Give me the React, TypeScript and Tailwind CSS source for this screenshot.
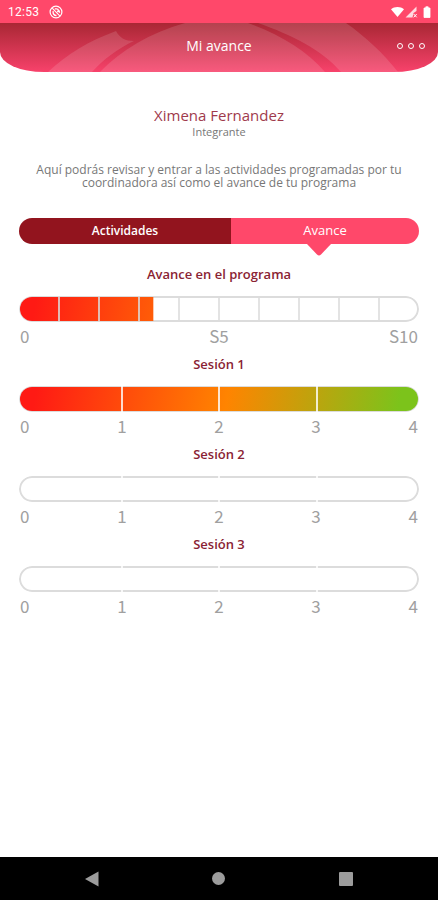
import type { ReactNode } from "react";

const PROGRAM_STEPS = 10;
const SESSION_LABELS = ["0", "1", "2", "3", "4"];

const sessions = [
  { title: "Sesión 1", done: 4 },
  { title: "Sesión 2", done: 0 },
  { title: "Sesión 3", done: 0 },
];

function StatusBar() {
  return (
    <div className="flex h-[23px] items-center justify-between bg-[#ff486a] pr-1 pl-2 text-white">
      <div className="flex items-center gap-2.5">
        <span className="font-[Roboto,sans-serif] text-[12px] tracking-wide">12:53</span>
        <svg viewBox="0 0 14 14" className="size-3.5" fill="none" stroke="currentColor" aria-hidden="true">
          <circle cx="7" cy="7" r="5.9" strokeWidth="1.2" />
          <path d="M3.200 3.200l7.600 7.600" strokeWidth="1.100" />
          <path
            d="M4.200 6.200c-.5 2.400.8 4.300 3.300 4.300M5.800 3.900h1.800c2 0 2.400 2.300.6 2.900M9.800 5.200l.8 2.600"
            strokeWidth="1.400"
          />
        </svg>
      </div>
      {/* wifi, mobile signal, battery */}
      <svg viewBox="0 0 44 14" className="h-3.5 w-11" fill="currentColor" aria-hidden="true">
        <path d="M1 4.200C4.500 1.200 10.500 1.200 14 4.200L7.500 12z" />
        <path d="M26.500 1.500V6l-3 2-1 4.500H15.500z" opacity=".8" />
        <path d="M23.700 9l3 3.300m0-3.300l-3 3.300" stroke="currentColor" strokeWidth="1" />
        <path d="M34 3h1.800V1.800h2.400V3H40v9.500H34z" stroke="currentColor" strokeWidth=".8" strokeLinejoin="round" />
      </svg>
    </div>
  );
}

function Header() {
  return (
    <header className="relative grid h-[49px] grid-cols-[1fr_auto_1fr] items-center overflow-hidden rounded-b-[44px_20px] bg-linear-to-b from-[#a92734] to-[#f8426b] px-3 pb-1">
      <svg
        viewBox="0 0 438 49"
        preserveAspectRatio="none"
        className="absolute inset-0 size-full"
        fill="#fff"
        fillOpacity=".13"
        aria-hidden="true"
      >
        <path d="M48 49C67 31 89 18 116 8c4 7 9 10 18 10C117 26 104 36 92 49z" />
        <path d="M100 49C121 27 150 10 185 0h63c31 11 58 27 77 49z" />
        <path d="M258 0h88c20 14 37 30 52 49h-57C322 27 292 12 258 0z" />
      </svg>
      <h1 className="relative col-start-2 text-[14px] text-white">Mi avance</h1>
      <button type="button" aria-label="Más opciones" className="relative flex gap-[5px] justify-self-end p-px">
        <span className="size-[6px] rounded-full border border-white" />
        <span className="size-[6px] rounded-full border border-white" />
        <span className="size-[6px] rounded-full border border-white" />
      </button>
    </header>
  );
}

function Tabs() {
  return (
    <div role="tablist" className="mx-[19px] mt-[29px] flex h-[26px] text-white">
      <button
        type="button"
        role="tab"
        aria-selected="false"
        className="w-[53%] rounded-l-full bg-[#92141e] text-[12px] font-semibold"
      >
        Actividades
      </button>
      <button
        type="button"
        role="tab"
        aria-selected="true"
        className="relative w-[47%] rounded-r-full bg-[#ff486a] text-[13px]"
      >
        Avance
        <svg
          viewBox="0 0 24 12"
          className="absolute top-full left-[47%] h-3 w-6 -translate-x-1/2"
          fill="#ff486a"
          aria-hidden="true"
        >
          <path d="M0 0h24L14 10.500q-2 2-4 0z" />
        </svg>
      </button>
    </div>
  );
}

type MeterProps = {
  title: string;
  percent: number;
  labels: string[];
  children: ReactNode;
};

function Meter({ title, percent, labels, children }: MeterProps) {
  return (
    <section>
      <h2 className="text-center text-[13px] leading-5 font-semibold text-[#8a2333]">{title}</h2>
      <div
        role="progressbar"
        aria-label={title}
        aria-valuenow={percent}
        className="relative mt-3 h-[26px] overflow-hidden rounded-full bg-white"
      >
        <div className="absolute inset-0 rounded-full border-2 border-[#dcdcdc]" />
        {/* the gradient spans the whole track, the fill only uncovers part of it */}
        <div
          className="absolute inset-px rounded-full bg-[linear-gradient(100deg,#ff1a14_4%,#ff8400_52%,#7cc31b_95%)]"
          style={{ clipPath: `inset(0 ${100 - percent}% 0 0)` }}
        />
        {children}
      </div>
      <div className="mt-[3px] flex justify-between px-px font-['Noto_Sans_CJK_SC',sans-serif] text-[17px] leading-[22px] text-[#a0a0a0]">
        {labels.map((label) => (
          <span key={label} className="flex w-2.5 justify-center first:justify-start last:justify-end">
            {label}
          </span>
        ))}
      </div>
    </section>
  );
}

function ProgramTicks() {
  return (
    <div className="absolute inset-px flex divide-x-2 divide-[#dcdcdc]/80">
      {Array.from({ length: PROGRAM_STEPS }, (_, i) => (
        <span key={i} className="flex-1" />
      ))}
    </div>
  );
}

function SessionTicks() {
  return (
    <div className="absolute inset-x-1.5 inset-y-0 flex divide-x-2 divide-white/80">
      {SESSION_LABELS.slice(1).map((label) => (
        <span key={label} className="flex-1" />
      ))}
    </div>
  );
}

function NavigationBar() {
  return (
    <nav className="grid h-[43px] grid-cols-3 items-center bg-black px-7 text-[#9c9c9c]">
      <button type="button" aria-label="Atrás" className="justify-self-center">
        <svg viewBox="0 0 16 16" className="size-4" fill="currentColor">
          <path d="M1 8L14.500.5v15z" />
        </svg>
      </button>
      <button type="button" aria-label="Inicio" className="justify-self-center">
        <span className="block size-[13px] rounded-full bg-current" />
      </button>
      <button type="button" aria-label="Recientes" className="justify-self-center">
        <span className="block size-3.5 rounded-[1px] bg-current" />
      </button>
    </nav>
  );
}

export default function App() {
  return (
    <div className="flex min-h-screen flex-col bg-white font-['Open_Sans',sans-serif]">
      <StatusBar />
      <Header />

      <main className="flex-1">
        <div className="mt-[33px] px-8 text-center text-[#777]">
          <p className="text-[15px] leading-5 text-[#a03a4c]">Ximena Fernandez</p>
          <p className="text-[11px] leading-[14px]">Integrante</p>
          <p className="mt-6 text-[12px] leading-[13px]">
            Aquí podrás revisar y entrar a las actividades programadas por tu coordinadora así como el
            avance de tu programa
          </p>
        </div>

        <Tabs />

        <div className="mt-5 flex flex-col gap-[7px] px-[19px]">
          <Meter title="Avance en el programa" percent={33.5} labels={["0", "S5", "S10"]}>
            <ProgramTicks />
          </Meter>
          {sessions.map((s) => (
            <Meter key={s.title} title={s.title} percent={(s.done / 4) * 100} labels={SESSION_LABELS}>
              <SessionTicks />
            </Meter>
          ))}
        </div>
      </main>

      <NavigationBar />
    </div>
  );
}
